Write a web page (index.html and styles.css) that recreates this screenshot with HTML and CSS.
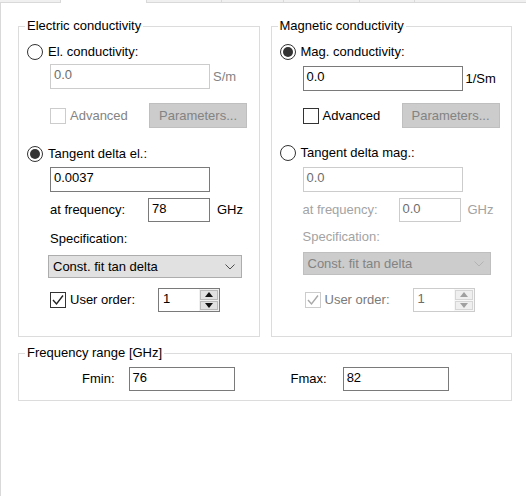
FILE: index.html
```html
<!DOCTYPE html>
<html>
<head>
<meta charset="utf-8">
<link rel="stylesheet" href="styles.css">
</head>
<body>
<div class="tabs">
  <div class="tab t1"></div>
  <div class="tab sel t2"></div>
  <div class="tab t3"></div>
  <div class="tab t4"></div>
  <div class="tab t5"></div>
  <div class="tab t6"></div>
  <div class="tab t7"></div>
</div>
<div class="panel">
  <div class="groups">
    <fieldset class="group elec">
      <legend>Electric conductivity</legend>
      <div class="row r1"><span class="radio"></span><span class="rlabel">El. conductivity:</span></div>
      <div class="row r2 indent"><div class="input wide dis">0.0</div><span class="unit u1 dtext">S/m</span></div>
      <div class="row r3 indent"><div class="chkwrap"><span class="check dis"></span><span class="clabel dtext">Advanced</span></div><div class="btn">Parameters...</div></div>
      <div class="row r4"><span class="radio on"></span><span class="rlabel">Tangent delta el.:</span></div>
      <div class="row r5 indent"><div class="input wide">0.0037</div></div>
      <div class="row r6 indent"><span class="flabel">at frequency:</span><div class="input small">78</div><span class="unit u2">GHz</span></div>
      <div class="row r7 indent"><span>Specification:</span></div>
      <div class="row r8 sel-row"><div class="select"><span>Const. fit tan delta</span><svg class="chev" width="10" height="6" viewBox="0 0 10 6"><polyline points="0.5,0.5 5,5 9.5,0.5" fill="none" stroke="#4d4d4d" stroke-width="1"/></svg></div></div>
      <div class="row r9 indent"><div class="chkwrap uo"><span class="check"><svg width="14" height="14" viewBox="0 0 14 14"><polyline points="2,7 5.5,11 12,2.5" fill="none" stroke="#222" stroke-width="1.4"/></svg></span><span class="clabel">User order:</span></div>
        <div class="spin"><span class="spinval">1</span><div class="spinbtns"><div class="sb"><svg width="8" height="5" viewBox="0 0 8 5"><polygon points="0,5 8,5 4,0" fill="#111"/></svg></div><div class="sb"><svg width="8" height="5" viewBox="0 0 8 5"><polygon points="0,0 8,0 4,5" fill="#111"/></svg></div></div></div>
      </div>
    </fieldset>
    <fieldset class="group mag">
      <legend>Magnetic conductivity</legend>
      <div class="row r1"><span class="radio on"></span><span class="rlabel">Mag. conductivity:</span></div>
      <div class="row r2 indent"><div class="input wide">0.0</div><span class="unit u1">1/Sm</span></div>
      <div class="row r3 indent"><div class="chkwrap"><span class="check"></span><span class="clabel">Advanced</span></div><div class="btn">Parameters...</div></div>
      <div class="row r4"><span class="radio"></span><span class="rlabel">Tangent delta mag.:</span></div>
      <div class="row r5 indent"><div class="input wide dis">0.0</div></div>
      <div class="row r6 indent"><span class="flabel ltext">at frequency:</span><div class="input small dis">0.0</div><span class="unit u2 ltext">GHz</span></div>
      <div class="row r7 indent"><span class="ltext">Specification:</span></div>
      <div class="row r8 sel-row"><div class="select dis"><span>Const. fit tan delta</span><svg class="chev" width="10" height="6" viewBox="0 0 10 6"><polyline points="0.5,0.5 5,5 9.5,0.5" fill="none" stroke="#b3b3b3" stroke-width="1"/></svg></div></div>
      <div class="row r9 indent"><div class="chkwrap uo"><span class="check dis"><svg width="14" height="14" viewBox="0 0 14 14"><polyline points="2,7 5.5,11 12,2.5" fill="none" stroke="#a8a8a8" stroke-width="1.4"/></svg></span><span class="clabel mtext">User order:</span></div>
        <div class="spin dis"><span class="spinval">1</span><div class="spinbtns"><div class="sb"><svg width="8" height="5" viewBox="0 0 8 5"><polygon points="0,5 8,5 4,0" fill="#a0a0a0"/></svg></div><div class="sb"><svg width="8" height="5" viewBox="0 0 8 5"><polygon points="0,0 8,0 4,5" fill="#a0a0a0"/></svg></div></div></div>
      </div>
    </fieldset>
  </div>
  <fieldset class="freq">
    <legend>Frequency range [GHz]</legend>
    <div class="row frow">
      <span class="fmin">Fmin:</span><div class="input fin f1">76</div>
      <span class="fmax">Fmax:</span><div class="input fin f2">82</div>
    </div>
  </fieldset>
</div>
</body>
</html>
```
FILE: styles.css
```css
html, body {
  margin: 0;
  padding: 0;
}
body {
  width: 526px;
  height: 496px;
  overflow: hidden;
  background: #ffffff;
  font-family: "Liberation Sans", Arial, sans-serif;
  font-size: 13px;
  line-height: 16px;
  color: #000000;
}

/* tab strip */
.tabs {
  display: flex;
  height: 3px;
}
.tab {
  box-sizing: border-box;
  height: 3px;
  background: #f0f0f0;
  border-right: 1px solid #d9d9d9;
  border-bottom: 1px solid #d9d9d9;
}
.tab.sel {
  background: #ffffff;
  border-bottom: none;
}
.t1 { width: 61px; }
.t2 { width: 86px; }
.t3 { width: 75px; }
.t4 { width: 62px; }
.t5 { width: 76px; }
.t6 { width: 55px; }
.t7 { flex: 1; border-right: none; }

/* panel */
.panel {
  box-sizing: border-box;
  height: 493px;
  border-left: 1px solid #d9d9d9;
  padding-left: 17px;
}
.groups {
  display: flex;
  gap: 11px;
  width: 494px;
}
fieldset {
  box-sizing: border-box;
  min-width: 0;
  margin: 0;
  border: 1px solid #dcdcdc;
}
legend {
  padding: 0 2px;
  margin-left: -2px;
  line-height: 16px;
}
.group {
  width: 242px;
  margin-top: 15px;
  padding: 0 0 24px 8px;
}

.row {
  display: flex;
  align-items: center;
}
.indent { margin-left: 23px; }

.r1 { height: 18px; margin-top: 9px; }
.r2 { height: 25px; margin-top: 3px; }
.r3 { height: 25px; margin-top: 14px; }
.r4 { height: 18px; margin-top: 17px; }
.r5 { height: 25px; margin-top: 4px; }
.r6 { height: 24px; margin-top: 6px; }
.r7 { height: 18px; margin-top: 8px; }
.r8 { height: 23px; margin-top: 7px; }
.r9 { height: 24px; margin-top: 10px; }

.mag .r2 { margin-top: 5px; }
.mag .r3 { margin-top: 12px; }
.mag .r4 { margin-top: 16px; }
.mag .r5 { margin-top: 5px; }
.mag .r7 { margin-top: 6px; }
.mag .r8 { margin-top: 6px; }
.mag .r9 { margin-top: 13px; }

/* radio */
.radio {
  box-sizing: border-box;
  width: 16px;
  height: 16px;
  border: 1px solid #333333;
  border-radius: 50%;
  display: flex;
  align-items: center;
  justify-content: center;
  flex: none;
}
.radio.on::after {
  content: "";
  width: 10px;
  height: 10px;
  border-radius: 50%;
  background: #333333;
}
.rlabel { margin-left: 5px; }

/* checkbox */
.check {
  box-sizing: border-box;
  width: 16px;
  height: 16px;
  border: 1px solid #333333;
  background: #ffffff;
  display: flex;
  align-items: center;
  justify-content: center;
  flex: none;
}
.check.dis { border-color: #cccccc; }
.chkwrap {
  display: flex;
  align-items: center;
  width: 99px;
}
.chkwrap.uo { width: 108px; }
.mag .chkwrap.uo { margin-left: 2px; width: 108px; }
.clabel { margin-left: 4px; }

/* inputs */
.input {
  box-sizing: border-box;
  border: 1px solid #7a7a7a;
  background: #ffffff;
  padding: 2px 3px 0;
  align-self: stretch;
  white-space: nowrap;
}
.input.dis {
  border-color: #cccccc;
  color: #6d6d6d;
}
.wide { width: 160px; }
.small { width: 62px; }
.unit.u1 { margin-left: 3px; }
.unit.u2 { margin-left: 7px; }
.flabel { width: 98px; }
.mag .flabel { width: 96px; }

.dtext { color: #838383; }
.ltext { color: #a3a3a3; }
.mtext { color: #7a7a7a; }

/* button */
.btn {
  box-sizing: border-box;
  width: 98px;
  align-self: stretch;
  background: #cccccc;
  border: 1px solid #bfbfbf;
  color: #838383;
  display: flex;
  align-items: center;
  justify-content: center;
}

/* select */
.sel-row { margin-left: 21px; }
.mag .sel-row { margin-left: 23px; }
.select {
  box-sizing: border-box;
  width: 194px;
  align-self: stretch;
  background: #e1e1e1;
  border: 1px solid #adadad;
  display: flex;
  align-items: center;
  justify-content: space-between;
  padding: 0 6px 0 4px;
}
.mag .select { width: 188px; }
.select.dis {
  background: #cccccc;
  border-color: #bfbfbf;
  color: #838383;
}

/* spin */
.spin {
  box-sizing: border-box;
  width: 62px;
  align-self: stretch;
  border: 1px solid #7a7a7a;
  display: flex;
}
.spin.dis { border-color: #cccccc; color: #6d6d6d; }
.spinval {
  flex: 1;
  padding: 2px 0 0 4px;
}
.spinbtns {
  width: 20px;
  display: flex;
  flex-direction: column;
  gap: 1px;
  padding: 1px;
  box-sizing: border-box;
  background: #f0f0f0;
}
.sb {
  flex: 1;
  box-sizing: border-box;
  background: #e1e1e1;
  border: 1px solid #b9b9b9;
  display: flex;
  align-items: center;
  justify-content: center;
}
.spin.dis .spinbtns { background: #f7f7f7; }
.spin.dis .sb { background: #efefef; border-color: #d6d6d6; }

/* frequency range */
.freq {
  width: 494px;
  margin-top: 8px;
  padding: 0 0 9px 8px;
}
.frow {
  height: 24px;
  margin-top: 6px;
}
.fmin { margin-left: 55px; }
.fin { width: 106px; }
.f1 { margin-left: 14px; }
.fmax { margin-left: 56px; }
.f2 { margin-left: 16px; }
```
